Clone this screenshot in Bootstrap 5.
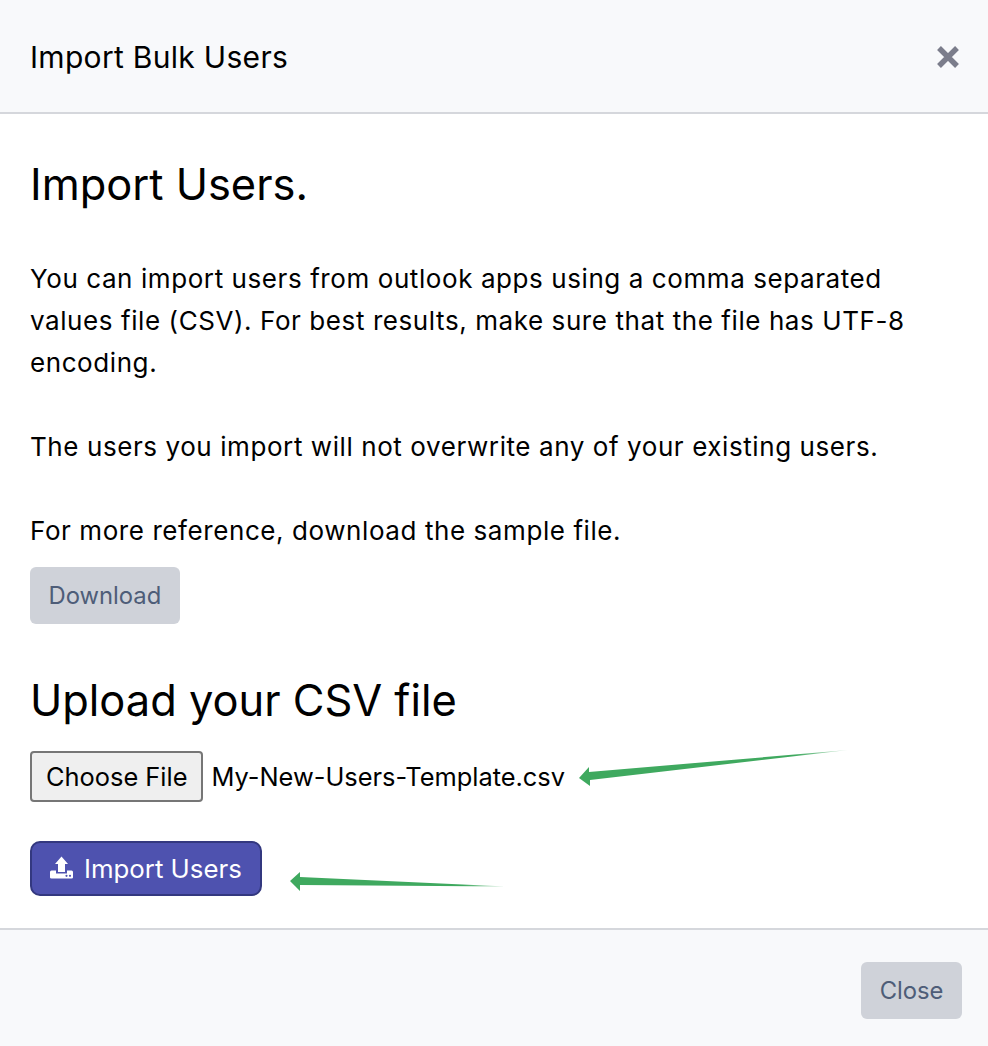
<!DOCTYPE html>
<html lang="en">
  <head>
    <meta charset="utf-8" />
    <meta name="viewport" content="width=device-width, initial-scale=1" />
    <title>Import Bulk Users</title>
    <link href="https://cdn.jsdelivr.net/npm/bootstrap@5.3.3/dist/css/bootstrap.min.css" rel="stylesheet" />
    <style>
      html, body {
        height: 100%;
      }
      body {
        font-family: Inter, "Liberation Sans", sans-serif;
        font-size: 26px;
        letter-spacing: 0.58px;
        line-height: 42px;
        color: #000;
        background: #fff;
        overflow: hidden;
      }
      .sheet {
        height: 1046px;
        position: relative;
      }
      .sheet-head {
        height: 114px;
        background: #f8f9fb;
        border-bottom: 2px solid #d5d7dc;
        padding: 2px 28px 0 30px;
      }
      .sheet-title {
        font-size: 30px;
        letter-spacing: 0.3px;
        font-weight: 400;
        margin: 0;
      }
      .sheet-body {
        height: 814px;
        padding: 43px 30px 0;
      }
      .big-title {
        font-size: 43.4px;
        letter-spacing: 0;
        line-height: 54px;
        font-weight: 400;
        margin: 0 0 47px;
      }
      .sub-title {
        font-size: 43.4px;
        letter-spacing: 0;
        line-height: 50px;
        font-weight: 400;
        margin: 51px 0 26px;
      }
      .copy {
        margin: 0 0 42px;
      }
      .copy-last {
        margin: 0 0 15px;
      }
      .btn-grey {
        background: #cfd2d9;
        color: #4e5d78;
        font-size: 23.8px;
        letter-spacing: 0;
        line-height: 42px;
        padding: 8px 18.5px 7px;
        border: 0;
        border-radius: 6px;
      }
      .file-btn {
        background: #efefef;
        border: 2px solid #767676;
        border-radius: 4px;
        color: #000;
        font-size: 25.4px;
        letter-spacing: 0;
        line-height: 32px;
        padding: 7px 14px;
        height: 51px;
      }
      .file-name {
        font-size: 25.4px;
        letter-spacing: 0;
      }
      .btn-import {
        background: #4e52af;
        border: 2px solid #33387f;
        border-radius: 10px;
        color: #fff;
        font-size: 25.8px;
        letter-spacing: 0;
        line-height: 32px;
        height: 55px;
        padding: 0 18px;
        margin-top: 39px;
      }
      .sheet-foot {
        height: 118px;
        background: #f8f9fb;
        border-top: 2px solid #d5d7dc;
        padding: 5px 26px 0;
      }
      .arrow-mark {
        position: absolute;
        left: 0;
        top: 0;
      }
    </style>
  </head>
  <body>
    <div class="sheet">
      <div class="sheet-head d-flex align-items-center justify-content-between">
        <h5 class="sheet-title">Import Bulk Users</h5>
        <svg width="24" height="24" viewBox="0 0 24 24" aria-label="Close">
          <path d="M3 3 L21 21 M21 3 L3 21" stroke="#7b7d8b" stroke-width="5.4" fill="none" />
        </svg>
      </div>
      <div class="sheet-body">
        <h2 class="big-title">Import Users.</h2>
        <p class="copy">You can import users from outlook apps using a comma separated values file (CSV). For best results, make sure that the file has UTF-8 encoding.</p>
        <p class="copy">The users you import will not overwrite any of your existing users.</p>
        <p class="copy-last">For more reference, download the sample file.</p>
        <button type="button" class="btn btn-grey">Download</button>
        <h2 class="sub-title">Upload your CSV file</h2>
        <div class="d-flex align-items-center gap-2">
          <button type="button" class="file-btn">Choose File</button>
          <span class="file-name">My-New-Users-Template.csv</span>
        </div>
        <button type="button" class="btn-import d-inline-flex align-items-center gap-2">
          <svg width="26" height="26" viewBox="0 0 26 26">
            <path fill="#fff" d="M11.500 .5 L18 8 H15 V16 H8 V8 H5 Z" />
            <path fill="#fff" d="M0 16 Q0 14.500 1.500 14.500 H6 V17.500 H17 V14.500 H21.500 Q23 14.500 23 16 V21.500 Q23 22.500 21.500 22.500 H1.500 Q0 22.500 0 21.500 Z" />
            <circle cx="16.500" cy="19.800" r="1.100" fill="#4e52af" />
            <circle cx="20" cy="19.800" r="1.100" fill="#4e52af" />
          </svg>
          Import Users
        </button>
      </div>
      <div class="sheet-foot d-flex align-items-center justify-content-end">
        <button type="button" class="btn btn-grey">Close</button>
      </div>
      <svg class="arrow-mark" width="988" height="1046" viewBox="0 0 988 1046">
        <defs>
          <linearGradient id="fadeA" x1="580" y1="0" x2="848" y2="0" gradientUnits="userSpaceOnUse">
            <stop offset="0.8" stop-color="#3fa95f" />
            <stop offset="1" stop-color="#3fa95f" stop-opacity="0.25" />
          </linearGradient>
          <linearGradient id="fadeB" x1="290" y1="0" x2="506" y2="0" gradientUnits="userSpaceOnUse">
            <stop offset="0.8" stop-color="#3fa95f" />
            <stop offset="1" stop-color="#3fa95f" stop-opacity="0.25" />
          </linearGradient>
        </defs>
        <path fill="url(#fadeA)" d="M579 778 L589 767 L589 772 L848 750 L590 780 L590 786 Z" />
        <path fill="url(#fadeB)" d="M290 881 L300 872 L300 877 L506 886.500 L300 885 L300 891 Z" />
      </svg>
    </div>
    <script src="https://cdn.jsdelivr.net/npm/bootstrap@5.3.3/dist/js/bootstrap.bundle.min.js"></script>
  </body>
</html>
